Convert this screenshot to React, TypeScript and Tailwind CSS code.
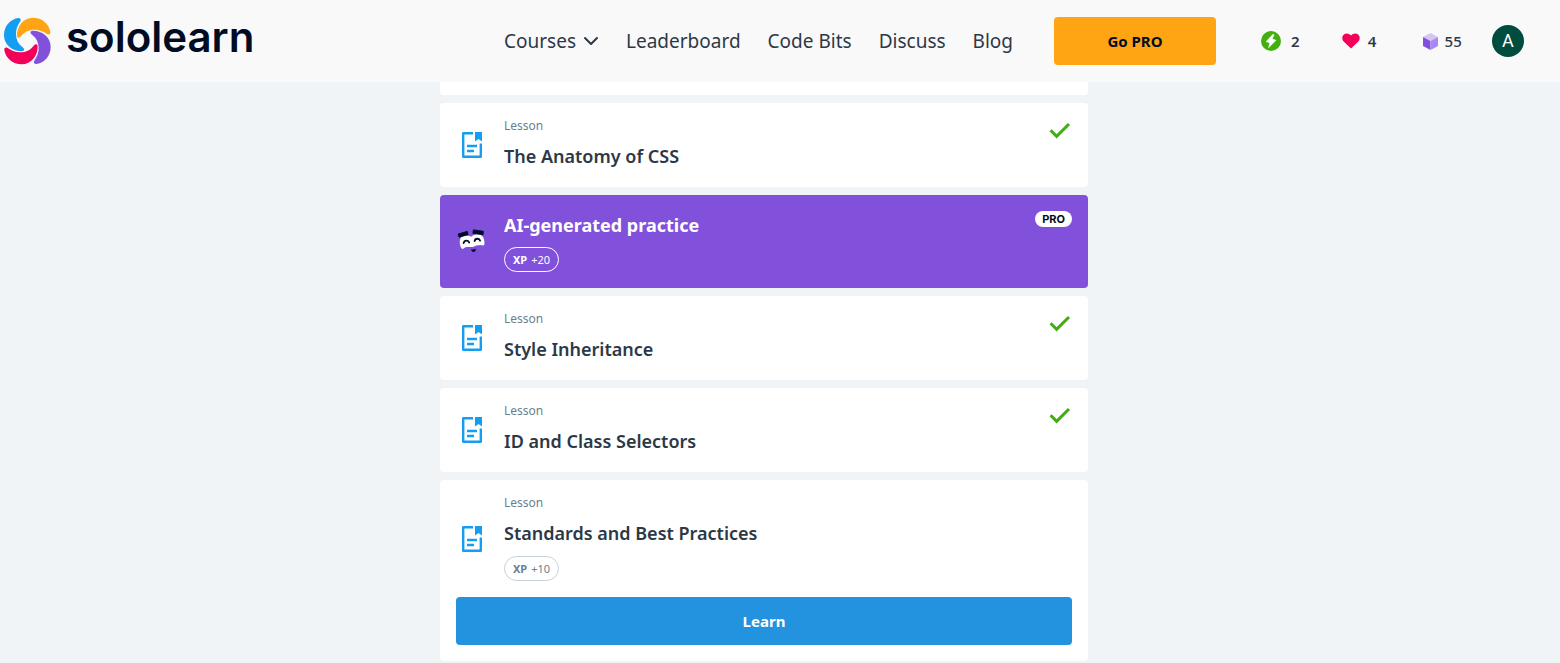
import { ChevronDown } from 'lucide-react';

function Logo() {
  const petal =
    'M54 24 C29 29 12 49 12 76 C12 105 38 125 67 124 C74 123 74 117 68 112 C42 93 43 58 61 34 C64 28 61 23 54 24 Z';
  return (
    <svg viewBox="9 21 147 144" className="h-12 w-[49px] shrink-0" aria-hidden="true">
      <path d={petal} fill="#149ef2" />
      <path d={petal} fill="#ffa413" transform="rotate(90 82 93)" />
      <path d={petal} fill="#8251db" transform="rotate(180 82 93)" />
      <path d={petal} fill="#f40058" transform="rotate(270 82 93)" />
    </svg>
  );
}

function LessonIcon() {
  return (
    <svg viewBox="0 0 32 32" className="size-8 shrink-0" aria-hidden="true">
      <path d="M17 4.200H7.200v23.600h17.600V14.500" fill="none" stroke="#149ef2" strokeWidth="2.400" strokeLinejoin="round" />
      <path d="M19 3h7v9.500l-3.500-2.500-3.500 2.500z" fill="#149ef2" />
      <path d="M11 17h10M11 22h7" stroke="#149ef2" strokeWidth="2.400" />
    </svg>
  );
}

function PracticeIcon() {
  return (
    <svg viewBox="0 0 32 32" className="size-8 shrink-0" aria-hidden="true">
      <path
        d="M3.800 17.500C3.200 12.500 6 9.600 9.800 9.600c2.600 0 4.200.6 5.500 1.200C16.800 9.300 19 8.200 21.600 8.200c4.600 0 7.400 4 6.800 10-.6 2-2.400 1-4 .9-3 0-4.800 1-7 1.600-3.200.7-5.700-.4-8.400.7-1.200.7-1.600 1.500-2.600 1.500-1.300-.5-2.300-3-2.600-5.400z"
        fill="#fff"
      />
      <path d="M7.600 17c.6-2.800 4.800-3.200 5.600-.4M18.600 15c.6-2.900 4.800-3 5.500-.3" fill="none" stroke="#000b24" strokeWidth="1.800" strokeLinecap="round" />
      <path d="M2 8l9.300-2.700.9 3.400L3 11.200zM17.400 3.800l10 1.500-.3 3.500-10.300-1.500z" fill="#000b24" stroke="#000b24" strokeWidth=".8" strokeLinejoin="round" />
      <path d="M15 23.200c1.600.4 3.400.2 4.900-.5-.1 2-1 3.400-2.300 3.300-1.300 0-2.400-1.200-2.600-2.800z" fill="#000b24" />
    </svg>
  );
}

function Check() {
  return (
    <svg viewBox="0 0 24 24" className="size-6 shrink-0" role="img" aria-label="Completed">
      <path d="M2.600 11.300l6 6L21 5" fill="none" stroke="#3fae0e" strokeWidth="3" />
    </svg>
  );
}

function Streak() {
  return (
    <svg viewBox="0 0 20 20" className="size-5" aria-hidden="true">
      <circle cx="10" cy="10" r="10" fill="#43af0f" />
      <path d="M11.800 3.400L5.200 10.600l3.700 1.300L7.600 16.700l7.400-7.400-3.900-1.300 2-4.200z" fill="#fff" stroke="#fff" strokeWidth=".6" strokeLinejoin="round" />
    </svg>
  );
}

function Heart() {
  return (
    <svg viewBox="0 0 18 16" className="h-4 w-[18px]" aria-hidden="true">
      <path d="M9 15.600L1.900 8.700C-.4 6.400-.1 3 1.900 1.400 4.100-.3 7.100.2 9 2.400 10.900.2 13.900-.3 16.100 1.400c2 1.600 2.300 5 0 7.300z" fill="#f40058" />
    </svg>
  );
}

function Cube() {
  return (
    <svg viewBox="0 0 15 17" className="h-[17px] w-[15px]" aria-hidden="true">
      <path d="M7.500 0L15 4 7.500 8 0 4z" fill="#d4c5f5" />
      <path d="M0 4l7.500 4v9L0 13z" fill="#8251db" />
      <path d="M15 4L7.500 8v9l7.500-4z" fill="#aa87f3" />
    </svg>
  );
}

function Xp({ amount, light = false }: { amount: number; light?: boolean }) {
  return (
    <span
      className={`mt-2 flex h-[25px] w-fit items-center gap-1 rounded-full border px-2 text-[11px] leading-4 ${
        light ? 'border-white text-white' : 'border-[#c8d2db] text-[#6b7f90]'
      }`}
    >
      <b className="text-[11px] font-bold">XP</b>+{amount}
    </span>
  );
}

function Lesson({ title, done = false, xp }: { title: string; done?: boolean; xp?: number }) {
  return (
    <li className="rounded bg-white p-4">
      <div className="flex gap-4">
        <div className="flex items-center">
          <LessonIcon />
        </div>
        <div className="flex-1">
          <p className="text-xs leading-[14px] text-[#6b7f90]">Lesson</p>
          <h2 className="mt-2 text-lg leading-[30px] font-semibold">{title}</h2>
          {xp !== undefined && <Xp amount={xp} />}
        </div>
        {done && <Check />}
      </div>
      {xp !== undefined && (
        <button type="button" className="mt-4 h-12 w-full rounded bg-[#2493df] text-[15px] font-bold text-white">
          Learn
        </button>
      )}
    </li>
  );
}

export default function App() {
  return (
    <div className="min-h-screen bg-[#f0f4f7] font-['Noto_Sans',sans-serif] text-[#2d3846]">
      <header className="sticky top-0 z-10 flex h-[82px] items-center bg-[#f9f9f9] pr-9 pl-[3px]">
        <div className="flex-1">
          <a href="#home" className="flex w-fit items-start gap-[14px] font-['Inter',sans-serif] text-[42px] leading-10 font-semibold text-[#000b24]">
            <Logo />
            sololearn
          </a>
        </div>
        <nav className="flex w-[550px] items-center gap-[27px] text-[19px] leading-7">
          <button type="button" className="-mr-1 flex items-center gap-[3px]">
            Courses
            <ChevronDown className="size-6" strokeWidth={2} aria-hidden="true" />
          </button>
          <a href="#leaderboard">Leaderboard</a>
          <a href="#code-bits">Code Bits</a>
          <a href="#discuss">Discuss</a>
          <a href="#blog">Blog</a>
        </nav>
        <div className="flex w-[470px] items-center justify-between text-[15px] font-medium">
          <button type="button" className="h-12 w-[162px] rounded bg-[#ffa413] font-bold text-[#000b24]">
            Go PRO
          </button>
          <div className="flex w-[263px] items-center justify-between">
            <span className="flex items-center gap-[10px] font-semibold">
              <Streak />2
            </span>
            <span className="ml-3 flex items-center gap-2 font-semibold">
              <Heart />4
            </span>
            <span className="ml-4 flex items-center gap-[7px]">
              <Cube />
              55
            </span>
            <button type="button" aria-label="Account" className="size-8 rounded-full bg-[#004d40] font-['Roboto',sans-serif] text-lg font-normal text-white">
              A
            </button>
          </div>
        </div>
      </header>
      <main className="pr-8">
        <ul className="mx-auto flex max-w-[648px] flex-col gap-2">
          <li className="h-[13px] rounded-b bg-white" />
          <Lesson title="The Anatomy of CSS" done />
          <li className="flex gap-4 rounded bg-[#8251db] p-4 text-white">
            <div className="flex items-center">
              <PracticeIcon />
            </div>
            <div className="flex-1">
              <h2 className="text-lg leading-7 font-bold">AI-generated practice</h2>
              <Xp amount={20} light />
            </div>
            <span className="h-4 rounded-full bg-white px-[7px] font-['Inter',sans-serif] text-[11px] leading-4 font-bold text-[#000b24]">PRO</span>
          </li>
          <Lesson title="Style Inheritance" done />
          <Lesson title="ID and Class Selectors" done />
          <Lesson title="Standards and Best Practices" xp={10} />
        </ul>
      </main>
    </div>
  );
}
